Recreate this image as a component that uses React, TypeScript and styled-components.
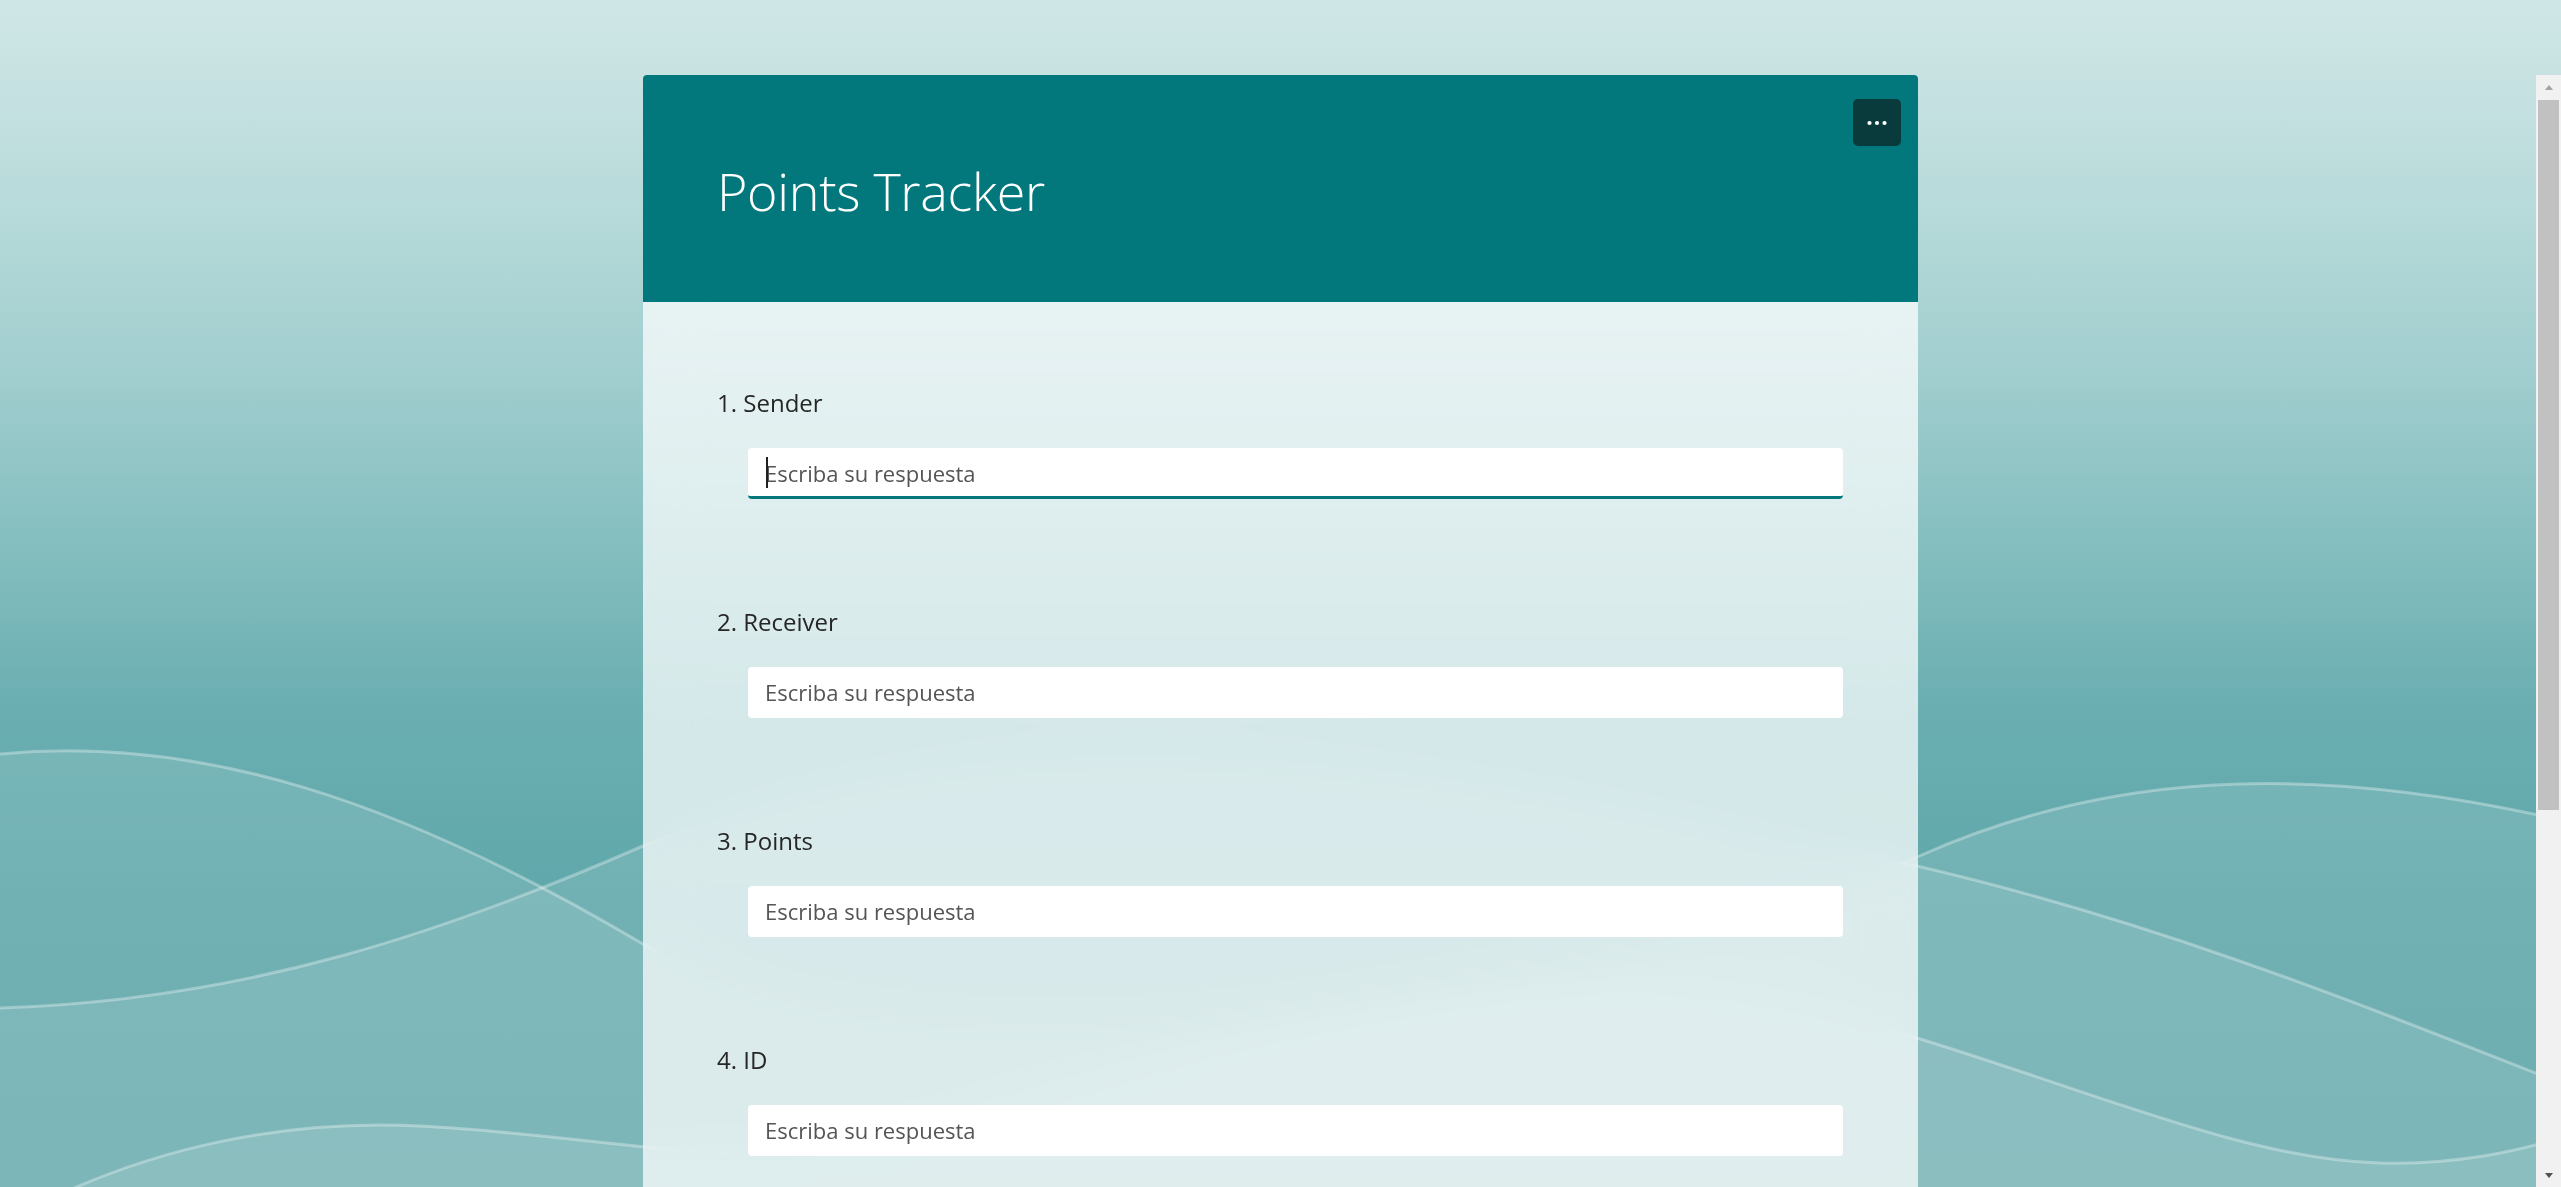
import React from "react";
import styled, { createGlobalStyle } from "styled-components";

const GlobalStyle = createGlobalStyle`
  html, body {
    margin: 0;
    padding: 0;
    height: 100%;
    overflow: hidden;
  }
  body {
    font-family: "Open Sans", "Noto Sans", "Liberation Sans", sans-serif;
    color: #242424;
  }
  #root {
    height: 100%;
  }
`;

const TEAL = "#03787c";

const Backdrop = styled.div`
  position: fixed;
  inset: 0;
  z-index: 0;
  svg {
    display: block;
    width: 100%;
    height: 100%;
  }
`;

const Page = styled.div`
  position: relative;
  z-index: 1;
  height: 100vh;
  box-sizing: border-box;
  padding-top: 75px;
  display: flex;
  flex-direction: column;
`;

const Viewport = styled.div`
  flex: 1;
  min-height: 0;
  display: flex;
`;

const Scroller = styled.div`
  flex: 1;
  min-width: 0;
  overflow-y: auto;
  overflow-x: hidden;
  scrollbar-width: none;
  &::-webkit-scrollbar {
    display: none;
  }
`;

const Rail = styled.div`
  width: 25px;
  flex: none;
  background: #f1f1f1;
  display: flex;
  flex-direction: column;
`;

const RailButton = styled.div<{ $dir: "up" | "down" }>`
  height: 24px;
  flex: none;
  display: flex;
  align-items: center;
  justify-content: center;

  &::before {
    content: "";
    width: 0;
    height: 0;
    border-left: 4.5px solid transparent;
    border-right: 4.5px solid transparent;
    ${(p) =>
      p.$dir === "up"
        ? "border-bottom: 5px solid #a3a3a3;"
        : "border-top: 5px solid #505050;"}
  }
`;

const RailTrack = styled.div`
  flex: 1;
  display: flex;
  flex-direction: column;
  padding: 1px 2px 0 2px;
`;

const RailThumb = styled.div`
  height: 710px;
  background: #c1c1c1;
`;

const Column = styled.div`
  display: flex;
  flex-direction: column;
  align-items: center;
  padding: 0 0 0 25px;
`;

const Card = styled.main`
  width: 1275px;
  border-radius: 4px 4px 0 0;
  overflow: hidden;
  background: rgba(255, 255, 255, 0.72);
  backdrop-filter: blur(24px);
  -webkit-backdrop-filter: blur(24px);
`;

const Banner = styled.header`
  height: 227px;
  box-sizing: border-box;
  background: ${TEAL};
  display: flex;
  justify-content: space-between;
  align-items: flex-start;
  padding: 24px 17px 0 75px;
`;

const Title = styled.h1`
  margin: 62px 0 0 -1px;
  font-family: "Open Sans", "Noto Sans", sans-serif;
  font-weight: 300;
  font-size: 52px;
  line-height: 60px;
  color: #ffffff;
  letter-spacing: -0.3px;
`;

const MoreButton = styled.button`
  width: 48px;
  height: 47px;
  border: none;
  border-radius: 5px;
  background: #093b3d;
  padding: 0;
  display: flex;
  align-items: center;
  justify-content: center;
  cursor: pointer;
`;

const Body = styled.section`
  display: flex;
  flex-direction: column;
  gap: 107px;
  padding: 85px 75px 160px 75px;
`;

const Question = styled.div`
  display: flex;
  flex-direction: column;
  gap: 29px;
`;

const Label = styled.label`
  font-size: 24px;
  line-height: 32px;
  color: #262626;
  margin-left: -1px;
`;

const AnswerField = styled.div<{ $active?: boolean }>`
  position: relative;
  margin-left: 30px;
  display: flex;

  &::after {
    content: "";
    display: ${(p) => (p.$active ? "block" : "none")};
    position: absolute;
    left: 18px;
    top: 9px;
    width: 2px;
    height: 31px;
    background: #202020;
  }
`;

const AnswerInput = styled.input<{ $active?: boolean }>`
  flex: 1;
  height: 51px;
  box-sizing: border-box;
  border: none;
  border-bottom: 3px solid ${(p) => (p.$active ? TEAL : "transparent")};
  border-radius: 4px;
  background: #ffffff;
  padding: 2px 17px 0 17px;
  font-family: "Open Sans", "Noto Sans", sans-serif;
  font-size: 22px;
  color: #242424;
  outline: none;

  &::placeholder {
    color: #555555;
  }
`;

const questions = ["Sender", "Receiver", "Points", "ID"];

function BackgroundArt() {
  const A =
    "M0,754 C200,735 400,800 643,944 C900,1100 1600,1000 1917,857 C2100,775 2300,760 2561,820";
  const B =
    "M0,1008 C250,1000 450,930 643,846 C850,760 1250,720 1917,866 C2150,920 2350,1000 2561,1083";
  const C =
    "M0,1225 C150,1140 300,1120 420,1126 C520,1131 580,1142 700,1152 C1000,1180 1400,880 1917,1038 C2100,1094 2250,1160 2380,1163 C2460,1165 2520,1150 2561,1138";
  const close = " L2561,1200 L0,1200 Z";
  return (
    <svg viewBox="0 0 2561 1187" preserveAspectRatio="none" aria-hidden="true">
      <defs>
        <linearGradient id="bgGrad" x1="0" y1="0" x2="0" y2="1">
          <stop offset="0" stopColor="#cfe6e6" />
          <stop offset="0.08" stopColor="#c6e1e1" />
          <stop offset="0.2" stopColor="#b3d8d8" />
          <stop offset="0.32" stopColor="#a0cdce" />
          <stop offset="0.45" stopColor="#86bfc0" />
          <stop offset="0.6" stopColor="#6aaeb1" />
          <stop offset="0.75" stopColor="#60a8ab" />
          <stop offset="1" stopColor="#5ca4a7" />
        </linearGradient>
      </defs>
      <rect x="0" y="0" width="2561" height="1187" fill="url(#bgGrad)" />
      <path d={A + close} fill="#ffffff" fillOpacity="0.11" />
      <path d={B + close} fill="#ffffff" fillOpacity="0.11" />
      <path d={C + close} fill="#ffffff" fillOpacity="0.11" />
      <path d={A} fill="none" stroke="#ffffff" strokeOpacity="0.32" strokeWidth="3" />
      <path d={B} fill="none" stroke="#ffffff" strokeOpacity="0.32" strokeWidth="3" />
      <path d={C} fill="none" stroke="#ffffff" strokeOpacity="0.32" strokeWidth="3" />
    </svg>
  );
}

function DotsIcon() {
  return (
    <svg width="20" height="6" viewBox="0 0 20 6" aria-hidden="true">
      <circle cx="2.5" cy="3" r="2.1" fill="#ffffff" />
      <circle cx="10" cy="3" r="2.1" fill="#ffffff" />
      <circle cx="17.5" cy="3" r="2.1" fill="#ffffff" />
    </svg>
  );
}

export default function App() {
  return (
    <>
      <GlobalStyle />
      <Backdrop>
        <BackgroundArt />
      </Backdrop>
      <Page>
        <Viewport>
          <Scroller>
            <Column>
              <Card>
                <Banner>
                  <Title>Points Tracker</Title>
                  <MoreButton aria-label="Más opciones">
                    <DotsIcon />
                  </MoreButton>
                </Banner>
                <Body>
                  {questions.map((q, i) => (
                    <Question key={q}>
                      <Label htmlFor={`q${i}`}>
                        {i + 1}. {q}
                      </Label>
                      <AnswerField $active={i === 0}>
                        <AnswerInput
                          id={`q${i}`}
                          $active={i === 0}
                          placeholder="Escriba su respuesta"
                        />
                      </AnswerField>
                    </Question>
                  ))}
                </Body>
              </Card>
            </Column>
          </Scroller>
          <Rail aria-hidden="true">
            <RailButton $dir="up" />
            <RailTrack>
              <RailThumb />
            </RailTrack>
            <RailButton $dir="down" />
          </Rail>
        </Viewport>
      </Page>
    </>
  );
}
